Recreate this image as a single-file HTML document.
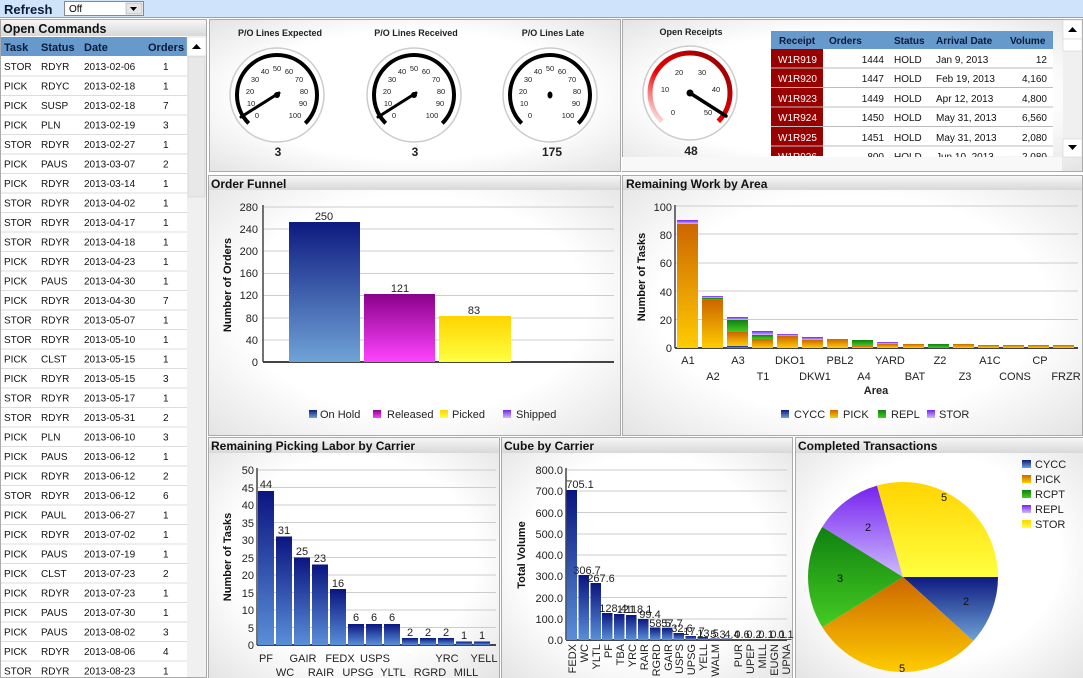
<!DOCTYPE html>
<html><head><meta charset="utf-8"><style>
html,body{margin:0;padding:0;background:#fff;overflow:hidden}
svg{display:block;font-family:"Liberation Sans",sans-serif}
</style></head><body>
<svg width="1083" height="678" viewBox="0 0 1083 678" xmlns="http://www.w3.org/2000/svg">
<defs>
<radialGradient id="vig" cx="50%" cy="50%" r="70%"><stop offset="60%" stop-color="#fff"/><stop offset="100%" stop-color="#e4e4e4"/></radialGradient>
<linearGradient id="hdr" x1="0" y1="0" x2="0" y2="1"><stop offset="0" stop-color="#f6f6f6"/><stop offset="1" stop-color="#d8d8d8"/></linearGradient>
<linearGradient id="gb" x1="0" y1="0" x2="0" y2="1"><stop offset="0" stop-color="#0d1a80"/><stop offset="1" stop-color="#6fa3d6"/></linearGradient>
<linearGradient id="gm" x1="0" y1="0" x2="0" y2="1"><stop offset="0" stop-color="#8a008a"/><stop offset="1" stop-color="#ff44ff"/></linearGradient>
<linearGradient id="gy" x1="0" y1="0" x2="0" y2="1"><stop offset="0" stop-color="#ffd400"/><stop offset="1" stop-color="#ffff40"/></linearGradient>
<linearGradient id="go" x1="0" y1="0" x2="0" y2="1"><stop offset="0" stop-color="#cc6600"/><stop offset="1" stop-color="#ffcc00"/></linearGradient>
<linearGradient id="gg" x1="0" y1="0" x2="0" y2="1"><stop offset="0" stop-color="#108010"/><stop offset="1" stop-color="#44cc22"/></linearGradient>
<linearGradient id="gp" x1="0" y1="0" x2="0" y2="1"><stop offset="0" stop-color="#7722ee"/><stop offset="1" stop-color="#ccbbff"/></linearGradient>
<linearGradient id="gbl" x1="0" y1="0" x2="0" y2="1"><stop offset="0" stop-color="#0a1580"/><stop offset="1" stop-color="#5a8fd8"/></linearGradient>
<linearGradient id="red" x1="0" y1="1" x2="1" y2="0"><stop offset="0" stop-color="#ffffff"/><stop offset="0.4" stop-color="#ee0000"/><stop offset="1" stop-color="#880000"/></linearGradient>
</defs>

<!-- top bar -->
<rect x="0" y="0" width="1083" height="17" fill="#cfe4fb"/>
<line x1="0" y1="17.5" x2="1083" y2="17.5" stroke="#7fa6d6"/>
<text x="4" y="14" font-size="13" font-weight="bold" fill="#0a1a3a">Refresh</text>
<rect x="64.5" y="1.5" width="79" height="14" fill="#fff" stroke="#888"/>
<text x="69" y="12" font-size="10">Off</text>
<rect x="126" y="3" width="16" height="11" fill="#e6e6e6" stroke="#999" stroke-width="0.5"/>
<path d="M130 7h7l-3.5 4z" fill="#000"/>

<!-- left panel -->
<rect x="0.5" y="19.5" width="206" height="658" fill="#fff" stroke="#aaa"/>
<rect x="1" y="20" width="205" height="16" fill="url(#hdr)"/>
<text x="3" y="33" font-size="12.5" font-weight="bold" fill="#111">Open Commands</text>
<rect x="1" y="37" width="186" height="19" fill="#6699cc"/>
<g font-size="11" font-weight="bold" fill="#0a1a3a">
<text x="4" y="51">Task</text><text x="41" y="51">Status</text><text x="84" y="51">Date</text><text x="148" y="51">Orders</text></g>
<rect x="187" y="37" width="19" height="640" fill="#f0f0f0"/>
<rect x="187" y="37" width="19" height="19" fill="#fff" stroke="#ccc" stroke-width="0.5"/>
<path d="M192 49h9l-4.5-5z" fill="#000"/>
<rect x="188" y="57" width="17" height="140" fill="#e8e8e8" stroke="#ccc" stroke-width="0.5"/>
<g font-size="10" fill="#111">
<g stroke="#ddd"><line x1="1" y1="76" x2="187" y2="76"/><line x1="1" y1="95.5" x2="187" y2="95.5"/><line x1="1" y1="115" x2="187" y2="115"/><line x1="1" y1="134.5" x2="187" y2="134.5"/><line x1="1" y1="154" x2="187" y2="154"/><line x1="1" y1="173.5" x2="187" y2="173.5"/><line x1="1" y1="193" x2="187" y2="193"/><line x1="1" y1="212.5" x2="187" y2="212.5"/><line x1="1" y1="232" x2="187" y2="232"/><line x1="1" y1="251.5" x2="187" y2="251.5"/><line x1="1" y1="271" x2="187" y2="271"/><line x1="1" y1="290.5" x2="187" y2="290.5"/><line x1="1" y1="310" x2="187" y2="310"/><line x1="1" y1="329.5" x2="187" y2="329.5"/><line x1="1" y1="349" x2="187" y2="349"/><line x1="1" y1="368.5" x2="187" y2="368.5"/><line x1="1" y1="388" x2="187" y2="388"/><line x1="1" y1="407.5" x2="187" y2="407.5"/><line x1="1" y1="427" x2="187" y2="427"/><line x1="1" y1="446.5" x2="187" y2="446.5"/><line x1="1" y1="466" x2="187" y2="466"/><line x1="1" y1="485.5" x2="187" y2="485.5"/><line x1="1" y1="505" x2="187" y2="505"/><line x1="1" y1="524.5" x2="187" y2="524.5"/><line x1="1" y1="544" x2="187" y2="544"/><line x1="1" y1="563.5" x2="187" y2="563.5"/><line x1="1" y1="583" x2="187" y2="583"/><line x1="1" y1="602.5" x2="187" y2="602.5"/><line x1="1" y1="622" x2="187" y2="622"/><line x1="1" y1="641.5" x2="187" y2="641.5"/><line x1="1" y1="661" x2="187" y2="661"/></g>
<text y="70"><tspan x="4">STOR</tspan><tspan x="41">RDYR</tspan><tspan x="84">2013-02-06</tspan><tspan x="163">1</tspan></text>
<text y="89.5"><tspan x="4">PICK</tspan><tspan x="41">RDYC</tspan><tspan x="84">2013-02-18</tspan><tspan x="163">1</tspan></text>
<text y="109"><tspan x="4">PICK</tspan><tspan x="41">SUSP</tspan><tspan x="84">2013-02-18</tspan><tspan x="163">7</tspan></text>
<text y="128.5"><tspan x="4">PICK</tspan><tspan x="41">PLN</tspan><tspan x="84">2013-02-19</tspan><tspan x="163">3</tspan></text>
<text y="148"><tspan x="4">STOR</tspan><tspan x="41">RDYR</tspan><tspan x="84">2013-02-27</tspan><tspan x="163">1</tspan></text>
<text y="167.5"><tspan x="4">PICK</tspan><tspan x="41">PAUS</tspan><tspan x="84">2013-03-07</tspan><tspan x="163">2</tspan></text>
<text y="187"><tspan x="4">PICK</tspan><tspan x="41">RDYR</tspan><tspan x="84">2013-03-14</tspan><tspan x="163">1</tspan></text>
<text y="206.5"><tspan x="4">STOR</tspan><tspan x="41">RDYR</tspan><tspan x="84">2013-04-02</tspan><tspan x="163">1</tspan></text>
<text y="226"><tspan x="4">STOR</tspan><tspan x="41">RDYR</tspan><tspan x="84">2013-04-17</tspan><tspan x="163">1</tspan></text>
<text y="245.5"><tspan x="4">STOR</tspan><tspan x="41">RDYR</tspan><tspan x="84">2013-04-18</tspan><tspan x="163">1</tspan></text>
<text y="265"><tspan x="4">PICK</tspan><tspan x="41">RDYR</tspan><tspan x="84">2013-04-23</tspan><tspan x="163">1</tspan></text>
<text y="284.5"><tspan x="4">PICK</tspan><tspan x="41">PAUS</tspan><tspan x="84">2013-04-30</tspan><tspan x="163">1</tspan></text>
<text y="304"><tspan x="4">PICK</tspan><tspan x="41">RDYR</tspan><tspan x="84">2013-04-30</tspan><tspan x="163">7</tspan></text>
<text y="323.5"><tspan x="4">STOR</tspan><tspan x="41">RDYR</tspan><tspan x="84">2013-05-07</tspan><tspan x="163">1</tspan></text>
<text y="343"><tspan x="4">STOR</tspan><tspan x="41">RDYR</tspan><tspan x="84">2013-05-10</tspan><tspan x="163">1</tspan></text>
<text y="362.5"><tspan x="4">PICK</tspan><tspan x="41">CLST</tspan><tspan x="84">2013-05-15</tspan><tspan x="163">1</tspan></text>
<text y="382"><tspan x="4">PICK</tspan><tspan x="41">RDYR</tspan><tspan x="84">2013-05-15</tspan><tspan x="163">3</tspan></text>
<text y="401.5"><tspan x="4">STOR</tspan><tspan x="41">RDYR</tspan><tspan x="84">2013-05-17</tspan><tspan x="163">1</tspan></text>
<text y="421"><tspan x="4">STOR</tspan><tspan x="41">RDYR</tspan><tspan x="84">2013-05-31</tspan><tspan x="163">2</tspan></text>
<text y="440.5"><tspan x="4">PICK</tspan><tspan x="41">PLN</tspan><tspan x="84">2013-06-10</tspan><tspan x="163">3</tspan></text>
<text y="460"><tspan x="4">PICK</tspan><tspan x="41">PAUS</tspan><tspan x="84">2013-06-12</tspan><tspan x="163">1</tspan></text>
<text y="479.5"><tspan x="4">PICK</tspan><tspan x="41">RDYR</tspan><tspan x="84">2013-06-12</tspan><tspan x="163">2</tspan></text>
<text y="499"><tspan x="4">STOR</tspan><tspan x="41">RDYR</tspan><tspan x="84">2013-06-12</tspan><tspan x="163">6</tspan></text>
<text y="518.5"><tspan x="4">PICK</tspan><tspan x="41">PAUL</tspan><tspan x="84">2013-06-27</tspan><tspan x="163">1</tspan></text>
<text y="538"><tspan x="4">PICK</tspan><tspan x="41">RDYR</tspan><tspan x="84">2013-07-02</tspan><tspan x="163">1</tspan></text>
<text y="557.5"><tspan x="4">PICK</tspan><tspan x="41">PAUS</tspan><tspan x="84">2013-07-19</tspan><tspan x="163">1</tspan></text>
<text y="577"><tspan x="4">PICK</tspan><tspan x="41">CLST</tspan><tspan x="84">2013-07-23</tspan><tspan x="163">2</tspan></text>
<text y="596.5"><tspan x="4">PICK</tspan><tspan x="41">RDYR</tspan><tspan x="84">2013-07-23</tspan><tspan x="163">1</tspan></text>
<text y="616"><tspan x="4">PICK</tspan><tspan x="41">PAUS</tspan><tspan x="84">2013-07-30</tspan><tspan x="163">1</tspan></text>
<text y="635.5"><tspan x="4">PICK</tspan><tspan x="41">PAUS</tspan><tspan x="84">2013-08-02</tspan><tspan x="163">3</tspan></text>
<text y="655"><tspan x="4">PICK</tspan><tspan x="41">RDYR</tspan><tspan x="84">2013-08-06</tspan><tspan x="163">4</tspan></text>
<text y="674.5"><tspan x="4">STOR</tspan><tspan x="41">RDYR</tspan><tspan x="84">2013-08-23</tspan><tspan x="163">1</tspan></text>
</g>

<!-- gauges panel -->
<rect x="209.5" y="19.5" width="411" height="152" fill="url(#vig)" stroke="#aaa"/>
<g font-size="9" font-weight="bold" fill="#222" text-anchor="middle">
<text x="280" y="36">P/O Lines Expected</text><text x="416" y="36">P/O Lines Received</text><text x="553" y="36">P/O Lines Late</text></g>
<g font-size="12" font-weight="bold" fill="#222" text-anchor="middle">
<text x="278" y="156">3</text><text x="415" y="156">3</text><text x="552" y="156">175</text></g>

<g transform="translate(277,95)">
<circle r="47" fill="#fff" stroke="#ccc" stroke-width="1.5"/>
<path d="M-28.3 28.3A40 40 0 1 1 28.3 28.3" fill="none" stroke="#000" stroke-width="4"/>
<g font-size="7.5" fill="#222" text-anchor="middle"><text x="-20" y="23">0</text><text x="-26" y="11">10</text><text x="-27" y="-1">20</text><text x="-22" y="-13">30</text><text x="-12" y="-21">40</text><text x="0" y="-24">50</text><text x="12" y="-21">60</text><text x="22" y="-13">70</text><text x="27" y="-1">80</text><text x="26" y="11">90</text><text x="18" y="23">100</text></g>
<path d="M-36 22L2 -2" stroke="#000" stroke-width="3" stroke-linecap="round"/><circle r="3" fill="#000"/>
</g>
<g transform="translate(414,95)">
<circle r="47" fill="#fff" stroke="#ccc" stroke-width="1.5"/>
<path d="M-28.3 28.3A40 40 0 1 1 28.3 28.3" fill="none" stroke="#000" stroke-width="4"/>
<g font-size="7.5" fill="#222" text-anchor="middle"><text x="-20" y="23">0</text><text x="-26" y="11">10</text><text x="-27" y="-1">20</text><text x="-22" y="-13">30</text><text x="-12" y="-21">40</text><text x="0" y="-24">50</text><text x="12" y="-21">60</text><text x="22" y="-13">70</text><text x="27" y="-1">80</text><text x="26" y="11">90</text><text x="18" y="23">100</text></g>
<path d="M-36 22L2 -2" stroke="#000" stroke-width="3" stroke-linecap="round"/><circle r="3" fill="#000"/>
</g>
<g transform="translate(550,95)">
<circle r="47" fill="#fff" stroke="#ccc" stroke-width="1.5"/>
<path d="M-28.3 28.3A40 40 0 1 1 28.3 28.3" fill="none" stroke="#000" stroke-width="4"/>
<g font-size="7.5" fill="#222" text-anchor="middle"><text x="-20" y="23">0</text><text x="-26" y="11">10</text><text x="-27" y="-1">20</text><text x="-22" y="-13">30</text><text x="-12" y="-21">40</text><text x="0" y="-24">50</text><text x="12" y="-21">60</text><text x="22" y="-13">70</text><text x="27" y="-1">80</text><text x="26" y="11">90</text><text x="18" y="23">100</text></g>
<ellipse rx="2.5" ry="3.5" fill="#000"/>
</g>

<!-- receipts panel -->
<rect x="622.5" y="19.5" width="460" height="152" fill="url(#vig)" stroke="#aaa"/>
<text x="691" y="35" font-size="9" font-weight="bold" fill="#222" text-anchor="middle">Open Receipts</text>
<g transform="translate(690,93)">
<circle r="47" fill="#fff" stroke="#ccc" stroke-width="1.5"/>
<path d="M-28.3 28.3A40 40 0 1 1 28.3 28.3" fill="none" stroke="url(#red)" stroke-width="5"/>
<g font-size="7.5" fill="#222" text-anchor="middle"><text x="-17" y="22">0</text><text x="-25" y="-1">10</text><text x="-11" y="-18">20</text><text x="12" y="-18">30</text><text x="26" y="-1">40</text><text x="18" y="22">50</text></g>
<path d="M0 0L36 23" stroke="#000" stroke-width="3.5" stroke-linecap="round"/><circle r="3.5" fill="#000"/>
</g>
<text x="691" y="155" font-size="12" font-weight="bold" fill="#222" text-anchor="middle">48</text>
<rect x="771" y="31" width="282" height="18" fill="#6699cc"/>
<g font-size="10" font-weight="bold" fill="#0a1a3a"><text x="779" y="44">Receipt</text><text x="829" y="44">Orders</text><text x="894" y="44">Status</text><text x="936" y="44">Arrival Date</text><text x="1010" y="44">Volume</text></g>
<rect x="771" y="49" width="282" height="107" fill="#fff"/>
<rect x="771" y="49" width="52" height="107" fill="#990000"/>
<g stroke="#bbb"><line x1="771" y1="68" x2="1053" y2="68"/><line x1="771" y1="87.5" x2="1053" y2="87.5"/><line x1="771" y1="107" x2="1053" y2="107"/><line x1="771" y1="126.5" x2="1053" y2="126.5"/><line x1="771" y1="146" x2="1053" y2="146"/></g>
<g font-size="10" fill="#111">
<g fill="#fff"><text x="778" y="63">W1R919</text><text x="778" y="82">W1R920</text><text x="778" y="102">W1R923</text><text x="778" y="121">W1R924</text><text x="778" y="141">W1R925</text><text x="778" y="160">W1R926</text></g>
<g text-anchor="end"><text x="884" y="63">1444</text><text x="884" y="82">1447</text><text x="884" y="102">1449</text><text x="884" y="121">1450</text><text x="884" y="141">1451</text><text x="884" y="160">800</text>
<text x="1047" y="63">12</text><text x="1047" y="82">4,160</text><text x="1047" y="102">4,800</text><text x="1047" y="121">6,560</text><text x="1047" y="141">2,080</text><text x="1047" y="160">2,080</text></g>
<text x="894" y="63">HOLD</text><text x="894" y="82">HOLD</text><text x="894" y="102">HOLD</text><text x="894" y="121">HOLD</text><text x="894" y="141">HOLD</text><text x="894" y="160">HOLD</text>
<text x="936" y="63">Jan 9, 2013</text><text x="936" y="82">Feb 19, 2013</text><text x="936" y="102">Apr 12, 2013</text><text x="936" y="121">May 31, 2013</text><text x="936" y="141">May 31, 2013</text><text x="936" y="160">Jun 10, 2013</text></g>
<rect x="622" y="157" width="440" height="14" fill="#f8f8f8"/>
<rect x="1063" y="20" width="19" height="137" fill="#f0f0f0"/>
<rect x="1063" y="20" width="19" height="19" fill="#fff" stroke="#ccc" stroke-width="0.5"/>
<path d="M1068 32h9l-4.5-5z" fill="#000"/>
<rect x="1063" y="39" width="19" height="12" fill="#fff" stroke="#ccc" stroke-width="0.5"/>
<rect x="1063" y="139" width="19" height="18" fill="#fff" stroke="#ccc" stroke-width="0.5"/>
<path d="M1068 145h9l-4.5 5z" fill="#000"/>

<!-- Order Funnel -->
<rect x="208.5" y="175.5" width="412" height="260" fill="url(#vig)" stroke="#aaa"/>
<rect x="209" y="176" width="411" height="14" fill="url(#hdr)"/>
<text x="211" y="188" font-size="12" font-weight="bold" fill="#111">Order Funnel</text>
<g stroke="#ccc"><line x1="263" y1="207" x2="614" y2="207"/><line x1="263" y1="229" x2="614" y2="229"/><line x1="263" y1="251" x2="614" y2="251"/><line x1="263" y1="273.5" x2="614" y2="273.5"/><line x1="263" y1="295.5" x2="614" y2="295.5"/><line x1="263" y1="318" x2="614" y2="318"/><line x1="263" y1="340" x2="614" y2="340"/></g>
<line x1="263" y1="205" x2="263" y2="362" stroke="#444" stroke-width="1.5"/>
<line x1="263" y1="362" x2="614" y2="362" stroke="#444" stroke-width="2"/>
<g font-size="11" fill="#222" text-anchor="end"><text x="258" y="211">280</text><text x="258" y="233">240</text><text x="258" y="255">200</text><text x="258" y="277">160</text><text x="258" y="299">120</text><text x="258" y="322">80</text><text x="258" y="344">40</text><text x="258" y="366">0</text></g>
<text transform="translate(231,285) rotate(-90)" font-size="11" font-weight="bold" text-anchor="middle" fill="#111">Number of Orders</text>
<rect x="289" y="222" width="71" height="140" fill="url(#gb)"/>
<rect x="364" y="294" width="71" height="68" fill="url(#gm)"/>
<rect x="439" y="316" width="72" height="46" fill="url(#gy)"/>
<g font-size="11" fill="#222" text-anchor="middle"><text x="324" y="220">250</text><text x="400" y="292">121</text><text x="474" y="314">83</text></g>
<g font-size="11" fill="#222"><rect x="309" y="410" width="8" height="8" fill="url(#gb)"/><text x="320" y="418">On Hold</text>
<rect x="373" y="410" width="8" height="8" fill="url(#gm)"/><text x="387" y="418">Released</text>
<rect x="440" y="410" width="8" height="8" fill="url(#gy)"/><text x="452" y="418">Picked</text>
<rect x="503" y="410" width="8" height="8" fill="url(#gp)"/><text x="516" y="418">Shipped</text></g>

<!-- Remaining Work -->
<rect x="622.5" y="175.5" width="460" height="260" fill="url(#vig)" stroke="#aaa"/>
<rect x="623" y="176" width="459" height="14" fill="url(#hdr)"/>
<text x="626" y="188" font-size="12" font-weight="bold" fill="#111">Remaining Work by Area</text>
<g stroke="#ccc"><line x1="675" y1="206" x2="1078" y2="206"/><line x1="675" y1="234" x2="1078" y2="234"/><line x1="675" y1="263" x2="1078" y2="263"/><line x1="675" y1="291" x2="1078" y2="291"/><line x1="675" y1="319.5" x2="1078" y2="319.5"/></g>
<line x1="675" y1="205" x2="675" y2="348" stroke="#444" stroke-width="1.5"/>
<line x1="675" y1="348" x2="1078" y2="348" stroke="#444" stroke-width="2"/>
<g font-size="11" fill="#222" text-anchor="end"><text x="672" y="211">100</text><text x="672" y="239">80</text><text x="672" y="267">60</text><text x="672" y="296">40</text><text x="672" y="324">20</text><text x="672" y="352">0</text></g>
<text transform="translate(645,277) rotate(-90)" font-size="11" font-weight="bold" text-anchor="middle" fill="#111">Number of Tasks</text>
<rect x="677" y="224" width="21" height="124" fill="url(#go)"/><rect x="677" y="220" width="21" height="4" fill="url(#gp)"/>
<rect x="702" y="300" width="21" height="48" fill="url(#go)"/><rect x="702" y="298" width="21" height="2" fill="url(#gg)"/><rect x="702" y="296" width="21" height="2" fill="url(#gp)"/>
<rect x="727" y="346" width="21" height="2" fill="url(#gb)"/><rect x="727" y="332" width="21" height="14" fill="url(#go)"/><rect x="727" y="320" width="21" height="12" fill="url(#gg)"/><rect x="727" y="317" width="21" height="3" fill="url(#gp)"/>
<rect x="752" y="339" width="21" height="9" fill="url(#go)"/><rect x="752" y="335" width="21" height="4" fill="url(#gg)"/><rect x="752" y="331" width="21" height="4" fill="url(#gp)"/>
<rect x="777" y="336" width="21" height="12" fill="url(#go)"/><rect x="777" y="334" width="21" height="2" fill="url(#gp)"/>
<rect x="802" y="340" width="21" height="8" fill="url(#go)"/><rect x="802" y="337" width="21" height="3" fill="url(#gp)"/>
<rect x="827" y="339" width="21" height="9" fill="url(#go)"/>
<rect x="852" y="346" width="21" height="2" fill="url(#go)"/><rect x="852" y="340" width="21" height="6" fill="url(#gg)"/>
<rect x="877" y="344" width="21" height="4" fill="url(#go)"/><rect x="877" y="342" width="21" height="2" fill="url(#gp)"/>
<rect x="903" y="344" width="21" height="4" fill="url(#go)"/>
<rect x="928" y="344" width="21" height="4" fill="url(#gg)"/>
<rect x="953" y="344" width="21" height="4" fill="url(#go)"/>
<rect x="978" y="345" width="21" height="3" fill="url(#go)"/>
<rect x="1003" y="345" width="21" height="3" fill="url(#go)"/>
<rect x="1028" y="345" width="21" height="3" fill="url(#go)"/>
<rect x="1053" y="345" width="21" height="3" fill="url(#go)"/>
<g font-size="11" fill="#222" text-anchor="middle">
<text x="688" y="364">A1</text><text x="738" y="364">A3</text><text x="790" y="364">DKO1</text><text x="840" y="364">PBL2</text><text x="890" y="364">YARD</text><text x="940" y="364">Z2</text><text x="990" y="364">A1C</text><text x="1040" y="364">CP</text>
<text x="713" y="380">A2</text><text x="763" y="380">T1</text><text x="815" y="380">DKW1</text><text x="864" y="380">A4</text><text x="915" y="380">BAT</text><text x="965" y="380">Z3</text><text x="1015" y="380">CONS</text><text x="1066" y="380">FRZR</text>
<text x="876" y="394" font-weight="bold">Area</text></g>
<g font-size="11" fill="#222"><rect x="781" y="410" width="8" height="8" fill="url(#gb)"/><text x="794" y="418">CYCC</text>
<rect x="830" y="410" width="8" height="8" fill="url(#go)"/><text x="843" y="418">PICK</text>
<rect x="878" y="410" width="8" height="8" fill="url(#gg)"/><text x="891" y="418">REPL</text>
<rect x="927" y="410" width="8" height="8" fill="url(#gp)"/><text x="939" y="418">STOR</text></g>

<!-- Picking labor -->
<rect x="208.5" y="437.5" width="291" height="241" fill="url(#vig)" stroke="#aaa"/>
<rect x="209" y="438" width="290" height="15" fill="url(#hdr)"/>
<text x="211" y="450" font-size="12" font-weight="bold" fill="#111">Remaining Picking Labor by Carrier</text>
<g stroke="#ccc"><line x1="257" y1="470" x2="496" y2="470"/><line x1="257" y1="487.5" x2="496" y2="487.5"/><line x1="257" y1="505" x2="496" y2="505"/><line x1="257" y1="522.5" x2="496" y2="522.5"/><line x1="257" y1="540" x2="496" y2="540"/><line x1="257" y1="557.5" x2="496" y2="557.5"/><line x1="257" y1="575" x2="496" y2="575"/><line x1="257" y1="592.5" x2="496" y2="592.5"/><line x1="257" y1="610" x2="496" y2="610"/><line x1="257" y1="627.5" x2="496" y2="627.5"/></g>
<line x1="257" y1="468" x2="257" y2="645" stroke="#444" stroke-width="1.5"/>
<line x1="257" y1="645" x2="496" y2="645" stroke="#444" stroke-width="2"/>
<g font-size="11" fill="#222" text-anchor="end"><text x="254" y="474">50</text><text x="254" y="492">45</text><text x="254" y="509">40</text><text x="254" y="527">35</text><text x="254" y="544">30</text><text x="254" y="562">25</text><text x="254" y="579">20</text><text x="254" y="597">15</text><text x="254" y="614">10</text><text x="254" y="632">5</text><text x="254" y="649">0</text></g>
<text transform="translate(231,557) rotate(-90)" font-size="11" font-weight="bold" text-anchor="middle" fill="#111">Number of Tasks</text>
<g fill="url(#gbl)">
<rect x="258" y="491" width="16" height="154"/><rect x="276" y="536.5" width="16" height="108.5"/><rect x="294" y="557.5" width="16" height="87.5"/><rect x="312" y="564.5" width="16" height="80.5"/><rect x="330" y="589" width="16" height="56"/><rect x="348" y="624" width="16" height="21"/><rect x="366" y="624" width="16" height="21"/><rect x="384" y="624" width="16" height="21"/><rect x="402" y="638" width="16" height="7"/><rect x="420" y="638" width="16" height="7"/><rect x="438" y="638" width="16" height="7"/><rect x="456" y="641.5" width="16" height="3.5"/><rect x="474" y="641.5" width="16" height="3.5"/></g>
<g font-size="11" fill="#222" text-anchor="middle"><text x="266" y="488">44</text><text x="284" y="534">31</text><text x="302" y="555">25</text><text x="320" y="562">23</text><text x="338" y="587">16</text><text x="356" y="621">6</text><text x="374" y="621">6</text><text x="392" y="621">6</text><text x="410" y="636">2</text><text x="428" y="636">2</text><text x="446" y="636">2</text><text x="464" y="639">1</text><text x="482" y="639">1</text>
<text x="266" y="662">PF</text><text x="303" y="662">GAIR</text><text x="340" y="662">FEDX</text><text x="375" y="662">USPS</text><text x="447" y="662">YRC</text><text x="484" y="662">YELL</text>
<text x="285" y="676">WC</text><text x="321" y="676">RAIR</text><text x="358" y="676">UPSG</text><text x="393" y="676">YLTL</text><text x="430" y="676">RGRD</text><text x="466" y="676">MILL</text></g>

<!-- Cube by carrier -->
<rect x="501.5" y="437.5" width="291" height="241" fill="url(#vig)" stroke="#aaa"/>
<rect x="502" y="438" width="290" height="15" fill="url(#hdr)"/>
<text x="504" y="450" font-size="12" font-weight="bold" fill="#111">Cube by Carrier</text>
<g stroke="#ccc"><line x1="566" y1="470" x2="787" y2="470"/><line x1="566" y1="491" x2="787" y2="491"/><line x1="566" y1="512.5" x2="787" y2="512.5"/><line x1="566" y1="534" x2="787" y2="534"/><line x1="566" y1="555" x2="787" y2="555"/><line x1="566" y1="576" x2="787" y2="576"/><line x1="566" y1="597.5" x2="787" y2="597.5"/><line x1="566" y1="619" x2="787" y2="619"/></g>
<line x1="566" y1="468" x2="566" y2="640" stroke="#444" stroke-width="1.5"/>
<line x1="566" y1="640" x2="787" y2="640" stroke="#444" stroke-width="2"/>
<g font-size="11" fill="#222" text-anchor="end"><text x="563" y="474">800.0</text><text x="563" y="495">700.0</text><text x="563" y="517">600.0</text><text x="563" y="538">500.0</text><text x="563" y="559">400.0</text><text x="563" y="580">300.0</text><text x="563" y="602">200.0</text><text x="563" y="623">100.0</text><text x="563" y="644">0.0</text></g>
<text transform="translate(525,555) rotate(-90)" font-size="11" font-weight="bold" text-anchor="middle" fill="#111">Total Volume</text>
<g fill="url(#gbl)">
<rect x="566.5" y="490" width="10.5" height="150"/><rect x="578.5" y="575" width="10.5" height="65"/><rect x="590.5" y="583" width="10.5" height="57"/><rect x="602" y="613" width="10.5" height="27"/><rect x="614" y="614" width="10.5" height="26"/><rect x="626" y="615" width="10.5" height="25"/><rect x="638" y="619" width="10.5" height="21"/><rect x="650" y="627.5" width="10.5" height="12.5"/><rect x="662" y="627.7" width="10.5" height="12.3"/><rect x="673.5" y="633" width="10.5" height="7"/><rect x="685.5" y="636" width="10.5" height="4"/><rect x="697.5" y="637" width="10.5" height="3"/><rect x="709.5" y="638.5" width="10.5" height="1.5"/><rect x="721.5" y="638.5" width="10.5" height="1.5"/><rect x="733" y="639" width="10.5" height="1"/><rect x="745" y="639" width="10.5" height="1"/><rect x="757" y="639" width="10.5" height="1"/><rect x="769" y="639" width="10.5" height="1"/><rect x="781" y="639" width="10.5" height="1"/></g>
<g font-size="11" fill="#222" text-anchor="middle"><text x="580" y="488">705.1</text><text x="587" y="574">306.7</text><text x="601" y="582">267.6</text><text x="613" y="612">128.4</text><text x="626" y="613">121</text><text x="639" y="613">118.1</text><text x="650" y="618">99.4</text><text x="660" y="627">58.5</text><text x="672" y="627">57.7</text><text x="682" y="632">32.6</text><text x="694" y="635">17.7</text><text x="708" y="637">13.5</text><text x="718" y="638">5.3</text><text x="732" y="638">4.4</text><text x="742" y="638">0.6</text><text x="754" y="638">0.2</text><text x="766" y="638">0.1</text><text x="778" y="638">0.1</text><text x="786" y="638">0.1</text></g>
<g font-size="11" fill="#222" text-anchor="end">
<text transform="translate(576,644) rotate(-90)">FEDX</text><text transform="translate(588,644) rotate(-90)">WC</text><text transform="translate(600,644) rotate(-90)">YLTL</text><text transform="translate(612,644) rotate(-90)">PF</text><text transform="translate(624,644) rotate(-90)">TBA</text><text transform="translate(636,644) rotate(-90)">YRC</text><text transform="translate(648,644) rotate(-90)">RAIR</text><text transform="translate(660,644) rotate(-90)">RGRD</text><text transform="translate(672,644) rotate(-90)">GAIR</text><text transform="translate(683,644) rotate(-90)">USPS</text><text transform="translate(695,644) rotate(-90)">UPSG</text><text transform="translate(707,644) rotate(-90)">YELL</text><text transform="translate(719,644) rotate(-90)">WALM</text><text transform="translate(742,644) rotate(-90)">PUR</text><text transform="translate(754,644) rotate(-90)">UPEP</text><text transform="translate(766,644) rotate(-90)">MILL</text><text transform="translate(778,644) rotate(-90)">EUGN</text><text transform="translate(790,644) rotate(-90)">UPNA</text></g>

<!-- Completed Transactions -->
<rect x="795.5" y="437.5" width="288" height="241" fill="url(#vig)" stroke="#aaa"/>
<rect x="796" y="438" width="287" height="15" fill="url(#hdr)"/>
<text x="798" y="450" font-size="12" font-weight="bold" fill="#111">Completed Transactions</text>
<path d="M903 577L998 577A95 95 0 0 1 973.2 641Z" fill="url(#gb)"/>
<path d="M903 577L973.2 641A95 95 0 0 1 822.3 627.1Z" fill="url(#go)"/>
<path d="M903 577L822.3 627.1A95 95 0 0 1 822.3 526.9Z" fill="url(#gg)"/>
<path d="M903 577L822.3 526.9A95 95 0 0 1 877 485.6Z" fill="url(#gp)"/>
<path d="M903 577L877 485.6A95 95 0 0 1 998 577Z" fill="url(#gy)"/>
<g font-size="11" fill="#111" text-anchor="middle"><text x="966" y="605">2</text><text x="902" y="672">5</text><text x="840" y="582">3</text><text x="868" y="531">2</text><text x="944" y="501">5</text></g>
<g font-size="11" fill="#222"><rect x="1022" y="460" width="9" height="8" fill="url(#gb)"/><text x="1035" y="468">CYCC</text>
<rect x="1022" y="475" width="9" height="8" fill="url(#go)"/><text x="1035" y="483">PICK</text>
<rect x="1022" y="490" width="9" height="8" fill="url(#gg)"/><text x="1035" y="498">RCPT</text>
<rect x="1022" y="505" width="9" height="8" fill="url(#gp)"/><text x="1035" y="513">REPL</text>
<rect x="1022" y="520" width="9" height="8" fill="url(#gy)"/><text x="1035" y="528">STOR</text></g>
</svg>
</body></html>
